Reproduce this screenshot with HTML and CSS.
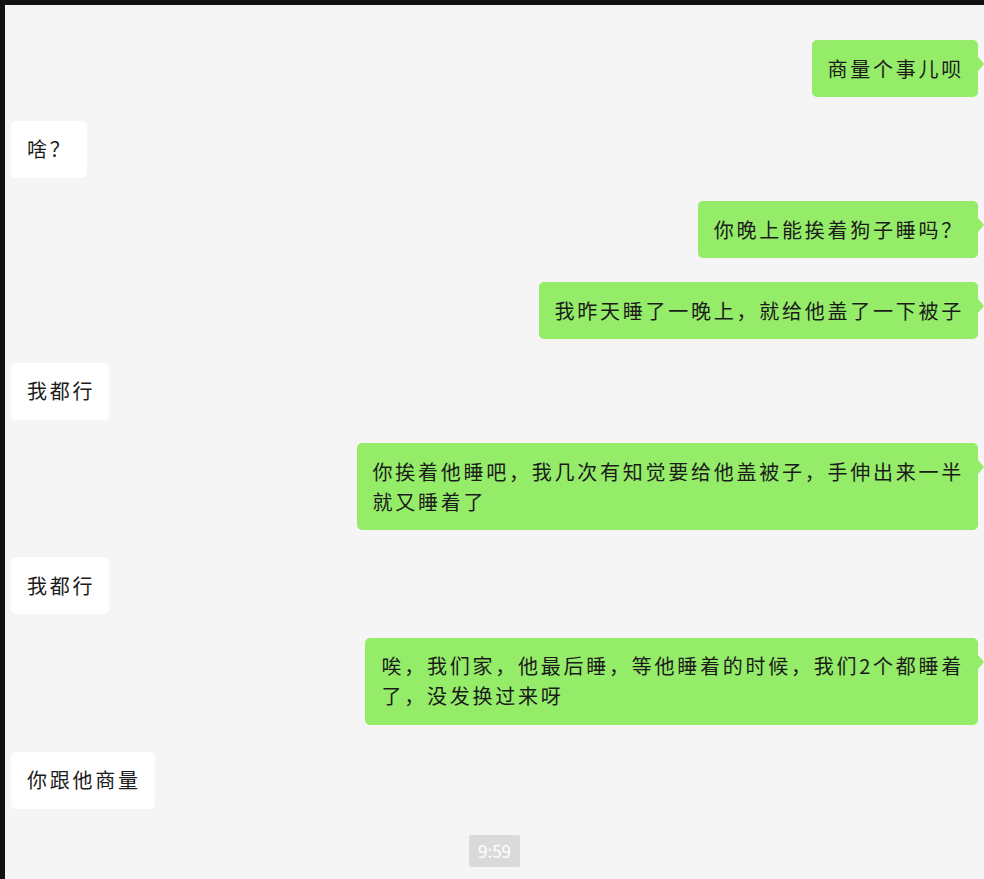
FILE: index.html
```html
<!DOCTYPE html>
<html lang="zh-CN">
<head>
  <meta charset="UTF-8">
  <meta name="viewport" content="width=device-width, initial-scale=1.0">
  <title>聊天记录</title>
  <link rel="stylesheet" href="styles.css">
</head>
<body>
  <div class="frame">
    <div class="chat">
      <div class="msg me"><div class="bubble">商量个事儿呗</div></div>
      <div class="msg other"><div class="bubble">啥？</div></div>
      <div class="msg me"><div class="bubble">你晚上能挨着狗子睡吗？</div></div>
      <div class="msg me"><div class="bubble">我昨天睡了一晚上，就给他盖了一下被子</div></div>
      <div class="msg other"><div class="bubble">我都行</div></div>
      <div class="msg me long"><div class="bubble">你挨着他睡吧，我几次有知觉要给他盖被子，手伸出来一半<br>就又睡着了</div></div>
      <div class="msg other"><div class="bubble">我都行</div></div>
      <div class="msg me long"><div class="bubble">唉，我们家，他最后睡，等他睡着的时候，我们2个都睡着<br>了，没发换过来呀</div></div>
      <div class="msg other last"><div class="bubble">你跟他商量</div></div>
      <div class="time">9:59</div>
    </div>
  </div>
</body>
</html>
```

FILE: styles.css
```css
html, body {
  margin: 0;
  padding: 0;
  background: #111;
}
body {
  font-family: "Noto Sans CJK SC", "Noto Sans", sans-serif;
}
.frame {
  padding: 5px 0 0 5px;
}
.chat {
  background: #f5f5f5;
  min-height: 874px;
  padding: 35px 6px 40px 6px;
  display: flex;
  flex-direction: column;
  gap: 23.7px;
  box-sizing: border-box;
}
.msg { display: flex; }
.msg.me { justify-content: flex-end; }
.msg.other { justify-content: flex-start; }
.msg.long, .msg.last { margin-bottom: 3px; }
.bubble {
  position: relative;
  max-width: 640px;
  padding: 13.5px 14px 13.5px 16px;
  font-size: 20px;
  line-height: 30px;
  letter-spacing: 2.75px;
  color: #1b1b1b;
  border-radius: 5px;
  background: #fff;
}
.me .bubble { background: #95ec69; }
.me .bubble::after {
  content: "";
  position: absolute;
  right: -6px;
  top: 17px;
  border-left: 6px solid #95ec69;
  border-top: 7px solid transparent;
  border-bottom: 7px solid transparent;
}
.time {
  align-self: center;
  background: #dadada;
  color: #fff;
  font-size: 17px;
  line-height: 32px;
  padding: 0 9px;
  border-radius: 2px;
}
```
